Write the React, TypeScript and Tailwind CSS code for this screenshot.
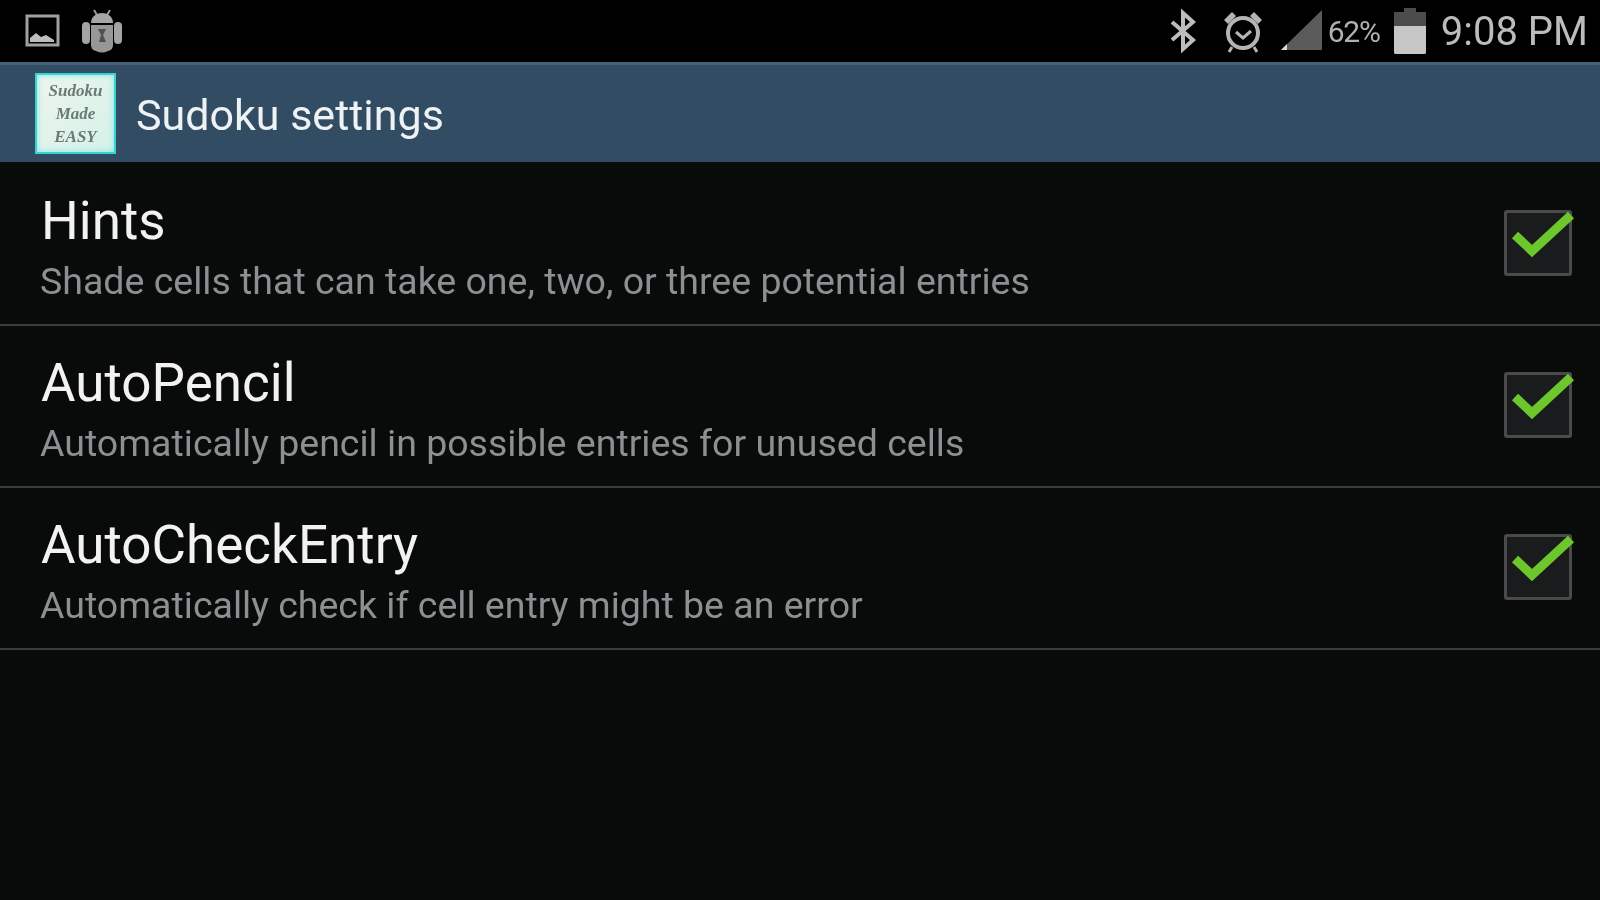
const font = { fontFamily: 'Roboto, "Noto Sans", sans-serif' };

function GalleryIcon() {
  return (
    <svg width="36" height="34" viewBox="0 0 36 34" className="ml-[25px]">
      <rect x="2" y="2" width="31" height="29" fill="none" stroke="#a0a0a0" strokeWidth="3" />
      <path d="M5 28 L5 24 L11 19 L16 23 L21 21 L29 26 L29 28 Z" fill="#bcbcbc" />
    </svg>
  );
}

function AndroidIcon() {
  return (
    <svg width="42" height="46" viewBox="0 0 42 46" className="ml-[20px]">
      <path d="M13 2 L16 7 M29 2 L26 7" stroke="#9c9c9c" strokeWidth="2" />
      <path d="M10 15 C10 8 16 5 21 5 C26 5 32 8 32 15 Z" fill="#a6a6a6" />
      <rect x="1" y="14" width="8" height="22" rx="4" fill="#a4a4a4" />
      <rect x="33" y="14" width="8" height="22" rx="4" fill="#a4a4a4" />
      <path d="M10 17 H32 V37 Q32 42 27 43 Q21 46 15 43 Q10 42 10 37 Z" fill="#979797" />
      <path d="M17 21 H25 L22 27 L25 34 H18 L20 27 Z" fill="#505050" />
    </svg>
  );
}

function Bluetooth() {
  return (
    <svg width="30" height="44" viewBox="0 0 30 44">
      <path d="M4 13 L25 31 L15 40 V4 L25 13 L4 31" fill="none" stroke="#bdbdbd" strokeWidth="4" />
    </svg>
  );
}

function Alarm() {
  return (
    <svg width="42" height="44" viewBox="0 0 42 44">
      <circle cx="21" cy="24" r="15" fill="none" stroke="#b4b4b4" strokeWidth="4" />
      <path d="M14 23 L21 29 L29 22" fill="none" stroke="#b4b4b4" strokeWidth="3" />
      <path d="M2 11 L10 3 L14 7 L6 15 Z M40 11 L32 3 L28 7 L36 15 Z" fill="#b4b4b4" />
      <path d="M10 38 L7 43 M32 38 L35 43" stroke="#b4b4b4" strokeWidth="3" />
    </svg>
  );
}

function Signal() {
  return (
    <svg width="42" height="42" viewBox="0 0 42 42">
      <path d="M41 0 V40 H0 Z" fill="#5a5a5a" />
      <path d="M0 40 L6 34 V40 Z" fill="#d8d8d8" />
    </svg>
  );
}

function Battery() {
  return (
    <svg width="32" height="46" viewBox="0 0 32 46">
      <path d="M10 0 H22 V4 H32 V46 H0 V4 H10 Z" fill="#4c4c4c" />
      <path d="M0 18 H32 V44 Q32 46 30 46 H2 Q0 46 0 44 Z" fill="#c6c6c6" />
    </svg>
  );
}

function Logo() {
  return (
    <div
      className="ml-[35px] w-[81px] h-[81px] border-2 border-[#35d4d0] bg-gradient-to-br from-[#eef4ee] to-[#d4f2e8] shadow-[inset_0_0_6px_#7fe8e4] flex flex-col items-center justify-center text-[#6a7a74] text-[17px] leading-[23px] italic font-bold"
      style={{ fontFamily: '"Liberation Serif", serif' }}
    >
      <span>Sudoku</span>
      <span>Made</span>
      <span>EASY</span>
    </div>
  );
}

function Check() {
  return (
    <div className="relative w-[68px] h-[66px] mr-[28px] mb-[3px] border-[3px] border-[#4a4a4a] rounded-[3px] bg-[#191b1c]">
      <svg width="74" height="56" viewBox="0 0 74 56" className="absolute left-[0px] top-[-5px]">
        <path d="M8 27 L25 43 L64 7" fill="none" stroke="#6cc62c" strokeWidth="9" />
      </svg>
    </div>
  );
}

const rows = [
  ['Hints', 'Shade cells that can take one, two, or three potential entries'],
  ['AutoPencil', 'Automatically pencil in possible entries for unused cells'],
  ['AutoCheckEntry', 'Automatically check if cell entry might be an error'],
];

export default function App() {
  return (
    <div className="w-[1600px] h-[900px] overflow-hidden bg-[#090a0a] flex flex-col blur-[0.7px]" style={font}>
      <div className="h-[62px] shrink-0 bg-black flex items-center">
        <GalleryIcon />
        <AndroidIcon />
        <div className="ml-auto flex items-center">
          <Bluetooth />
          <div className="ml-[24px]"><Alarm /></div>
          <div className="ml-[17px]"><Signal /></div>
          <span className="ml-[5px] text-[30px] tracking-[-1.2px] text-[#b0b0b0]">62%</span>
          <div className="ml-[14px]"><Battery /></div>
          <span className="ml-[15px] mr-[12px] text-[40px] leading-[62px] pt-[2px] text-[#bcbcbc]">9:08 PM</span>
        </div>
      </div>
      <div className="h-[100px] shrink-0 bg-[#324d63] border-t-[3px] border-[#47617a] flex items-center">
        <Logo />
        <span className="ml-[20px] text-[43px] leading-[50px] pt-[3px] text-[#eef2f4]">Sudoku settings</span>
      </div>
      <div className="pt-[2px] flex flex-col">
        {rows.map(([title, sub]) => (
          <div key={title} className="h-[162px] shrink-0 border-b-2 border-[#3a3b3c] flex items-center justify-between">
            <div className="ml-[40px] flex flex-col pt-[13px]">
              <span className="ml-[1px] text-[53px] leading-[60px] text-[#f2f2f2]">{title}</span>
              <span className="text-[37.5px] leading-[60px] text-[#8b9092]">{sub}</span>
            </div>
            <Check />
          </div>
        ))}
      </div>
    </div>
  );
}
